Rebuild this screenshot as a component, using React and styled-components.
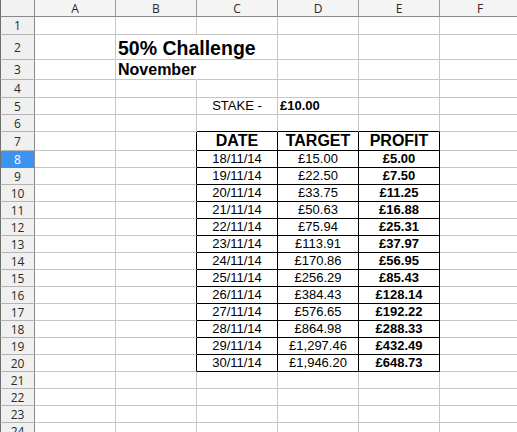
import React from "react";
import styled, { createGlobalStyle } from "styled-components";

const GlobalStyle = createGlobalStyle`
  html, body {
    margin: 0;
    padding: 0;
    background: #ffffff;
    overflow: hidden;
  }
`;

const COLS = ["A", "B", "C", "D", "E", "F"];
const GRID = "#c6c6c6";
const INK = "#000000";

// table block sits in C7:E20
const inTable = (r, c) => r >= 7 && r <= 20 && c >= 2 && c <= 4;

const Sheet = styled.div`
  display: grid;
  grid-template-columns: 35px repeat(6, 81px);
  grid-template-rows: ${(p) => p.$rows};
  width: 521px;
  font-family: "Liberation Sans", Arial, sans-serif;
  color: #000;
`;

const Corner = styled.div`
  background: #f2f2f2;
  border-left: 1px solid #6f6f6f;
  border-right: 1px solid #8a8a8a;
  border-bottom: 1px solid #8a8a8a;
`;

const ColHead = styled.div`
  display: flex;
  align-items: center;
  justify-content: center;
  background: #f4f4f4;
  border-right: 1px solid #9c9c9c;
  border-bottom: 1px solid #8a8a8a;
  font-family: "Open Sans", "Noto Sans", sans-serif;
  font-size: 12px;
  color: #2a2a2a;
`;

const RowHead = styled.div`
  display: flex;
  align-items: center;
  justify-content: center;
  background: ${(p) => (p.$active ? "#3d94f0" : "#f0f0f0")};
  border-left: 1px solid #6f6f6f;
  border-right: 1px solid #8a8a8a;
  border-bottom: 1px solid ${(p) => (p.$active ? "#3d94f0" : "#b4b4b4")};
  font-family: "Open Sans", "Noto Sans", sans-serif;
  font-size: 12px;
  color: ${(p) => (p.$active ? "#ffffff" : "#2a2a2a")};
`;

const Cell = styled.div`
  display: flex;
  align-items: flex-end;
  justify-content: ${(p) => p.$align};
  padding: 0 2px;
  min-width: 0;
  white-space: nowrap;
  overflow: visible;
  border-right: 1px solid ${(p) => p.$right};
  border-bottom: 1px solid ${(p) => p.$bottom};
  font-size: ${(p) => p.$size}px;
  font-weight: ${(p) => (p.$bold ? 700 : 400)};
  line-height: 1.15;
`;

const days = [
  ["18/11/14", "£15.00", "£5.00"],
  ["19/11/14", "£22.50", "£7.50"],
  ["20/11/14", "£33.75", "£11.25"],
  ["21/11/14", "£50.63", "£16.88"],
  ["22/11/14", "£75.94", "£25.31"],
  ["23/11/14", "£113.91", "£37.97"],
  ["24/11/14", "£170.86", "£56.95"],
  ["25/11/14", "£256.29", "£85.43"],
  ["26/11/14", "£384.43", "£128.14"],
  ["27/11/14", "£576.65", "£192.22"],
  ["28/11/14", "£864.98", "£288.33"],
  ["29/11/14", "£1,297.46", "£432.49"],
  ["30/11/14", "£1,946.20", "£648.73"],
];

const heights = { 1: 18, 2: 25, 3: 20, 4: 18, 7: 19 };
const ROW_COUNT = 24;

// cell contents keyed by "row:col" (col index 0 = A)
const content = {
  "2:1": { text: "50% Challenge", bold: true, size: 19.5, spill: true },
  "3:1": { text: "November", bold: true, size: 16, spill: true },
  "5:2": { text: "STAKE -", size: 13, align: "center" },
  "5:3": { text: "£10.00", bold: true, size: 13 },
  "7:2": { text: "DATE", bold: true, size: 16, align: "center" },
  "7:3": { text: "TARGET", bold: true, size: 16, align: "center" },
  "7:4": { text: "PROFIT", bold: true, size: 16, align: "center" },
};
days.forEach(([date, target, profit], i) => {
  const r = 8 + i;
  content[`${r}:2`] = { text: date, size: 13, align: "center" };
  content[`${r}:3`] = { text: target, size: 13, align: "center" };
  content[`${r}:4`] = { text: profit, bold: true, size: 13, align: "center" };
});

const alignMap = { left: "flex-start", center: "center" };

export default function App() {
  const rowNums = Array.from({ length: ROW_COUNT }, (_, i) => i + 1);
  const template = ["17px", ...rowNums.map((r) => `${heights[r] || 17}px`)].join(" ");

  return (
    <>
      <GlobalStyle />
      <Sheet $rows={template}>
        <Corner />
        {COLS.map((c) => (
          <ColHead key={c}>{c}</ColHead>
        ))}
        {rowNums.map((r) => (
          <React.Fragment key={r}>
            <RowHead $active={r === 8}>{r}</RowHead>
            {COLS.map((_, c) => {
              const item = content[`${r}:${c}`];
              const spillLeft = content[`${r}:${c - 1}`]?.spill;
              const right =
                inTable(r, c) || inTable(r, c + 1)
                  ? INK
                  : item?.spill
                  ? "transparent"
                  : GRID;
              const bottom = inTable(r, c) || inTable(r + 1, c) ? INK : GRID;
              return (
                <Cell
                  key={c}
                  $align={alignMap[item?.align || "left"]}
                  $size={item?.size || 13}
                  $bold={item?.bold}
                  $right={spillLeft && r === 2 ? GRID : right}
                  $bottom={bottom}
                >
                  {item?.text}
                </Cell>
              );
            })}
          </React.Fragment>
        ))}
      </Sheet>
    </>
  );
}
